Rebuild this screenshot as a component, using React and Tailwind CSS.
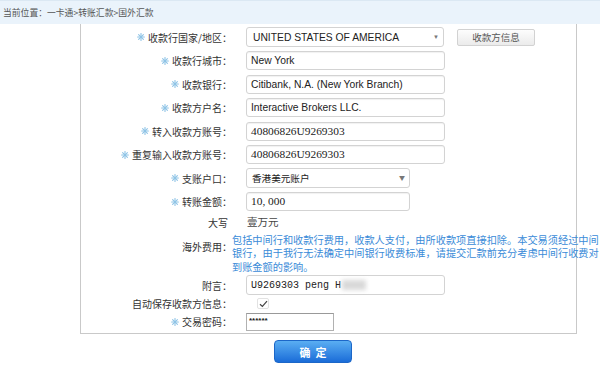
import React from 'react';

const CJK = { fontFamily: '"Noto Sans CJK SC", "Liberation Sans", sans-serif' };

function Star() {
  return (
    <svg width="8" height="8" viewBox="0 0 8 8" className="shrink-0">
      <g stroke="#8ec3e6" strokeWidth="1.1" strokeLinecap="round">
        <line x1="4" y1="0.6" x2="4" y2="7.4" />
        <line x1="0.6" y1="4" x2="7.4" y2="4" />
        <line x1="1.6" y1="1.6" x2="6.4" y2="6.4" />
        <line x1="6.4" y1="1.6" x2="1.6" y2="6.4" />
      </g>
    </svg>
  );
}

function Label({ text, star = true, colon = true }) {
  return (
    <div className="w-[151px] shrink-0 flex items-center justify-end gap-[3px] text-[10px] text-[#333]" style={CJK}>
      {star && <Star />}
      <span>{text}{colon ? '：' : ''}</span>
    </div>
  );
}

function Field({ children, w = 'w-[199px]', font = 'sans' }) {
  const ff = font === 'serif'
    ? { fontFamily: '"Liberation Serif", serif' }
    : font === 'cjk' ? CJK : { fontFamily: '"Liberation Sans", Arial, sans-serif' };
  return (
    <div
      className={`${w} h-[19px] ml-[14px] flex items-center px-[4px] border border-[#d3d3d3] rounded-[3px] bg-white shadow-[inset_0_1px_1px_rgba(0,0,0,0.06)] text-[#222]`}
      style={ff}
    >
      {children}
    </div>
  );
}

function Row({ label, star, colon, children, h = 'h-[23.5px]' }) {
  return (
    <div className={`flex items-center ${h}`}>
      <Label text={label} star={star} colon={colon} />
      {children}
    </div>
  );
}

function Caret() {
  return <span className="ml-auto mr-[4px] text-[6px] text-[#777] leading-none">▼</span>;
}

export default function App() {
  return (
    <div className="w-[600px] h-[365px] bg-white overflow-hidden">
      {/* breadcrumb */}
      <div className="h-[24px] bg-[#eaf3fb] border-t border-[#dbe8f3] flex items-center pl-[3px] text-[8.8px] text-[#555]" style={CJK}>
        当前位置：一卡通&gt;转账汇款&gt;国外汇款
      </div>

      {/* form panel */}
      <div className="ml-[80px] w-[497px] border-x border-b border-[#c9c9c9] pt-[1.5px]">
        <Row label="收款行国家/地区">
          <div className="w-[198px] h-[20px] ml-[14px] flex items-center pl-[6px] border border-[#d3d3d3] rounded-[3px] bg-white text-[10.3px] text-[#222]" style={{ fontFamily: '"Liberation Sans", Arial, sans-serif' }}>
            UNITED STATES OF AMERICA
            <Caret />
          </div>
          <button className="ml-[13px] w-[78px] h-[17px] border border-[#d2d2d2] rounded-[2px] bg-gradient-to-b from-[#fdfdfd] to-[#ebebeb] text-[9.5px] text-[#555]" style={CJK}>
            收款方信息
          </button>
        </Row>
        <Row label="收款行城市">
          <Field><span className="text-[10.3px]">New York</span></Field>
        </Row>
        <Row label="收款银行">
          <Field><span className="text-[10.3px]">Citibank, N.A. (New York Branch)</span></Field>
        </Row>
        <Row label="收款方户名">
          <Field><span className="text-[10.3px]">Interactive Brokers LLC.</span></Field>
        </Row>
        <Row label="转入收款方账号">
          <Field font="serif"><span className="text-[11.4px]">40806826U9269303</span></Field>
        </Row>
        <Row label="重复输入收款方账号">
          <Field font="serif"><span className="text-[11.4px]">40806826U9269303</span></Field>
        </Row>
        <Row label="支账户口">
          <div className="w-[164px] h-[20px] ml-[14px] flex items-center pl-[5px] border border-[#d3d3d3] rounded-[3px] bg-white text-[9.6px] text-[#222]" style={CJK}>
            香港美元账户
            <Caret />
          </div>
        </Row>
        <Row label="转账金额">
          <Field w="w-[164px]" font="serif"><span className="text-[11.4px]">10,&nbsp;000</span></Field>
        </Row>

        <div className="flex items-center h-[17px]">
          <div className="w-[147px] shrink-0 text-right text-[10px] text-[#333]" style={CJK}>大写</div>
          <span className="ml-[19px] text-[10.5px] text-[#444]" style={{ fontFamily: '"Noto Sans CJK SC", serif' }}>壹万元</span>
        </div>

        {/* overseas fee */}
        <div className="flex h-[43px]">
          <div className="w-[151px] shrink-0 text-right pt-[9px] text-[10px] leading-[14px] text-[#333]" style={CJK}>海外费用：</div>
          <div className="pt-[2px] text-[10.2px] leading-[13.5px] text-[#3a8bd8] whitespace-nowrap" style={CJK}>
            包括中间行和收款行费用，收款人支付，由所收款项直接扣除。本交易须经过中间<br />
            银行，由于我行无法确定中间银行收费标准，请提交汇款前充分考虑中间行收费对<br />
            到账金额的影响。
          </div>
        </div>

        <Row label="附言" star={false} h="h-[23px]">
          <div className="w-[199px] h-[20px] ml-[14px] flex items-center px-[4px] border border-[#d3d3d3] rounded-[3px] bg-white text-[#222]" style={{ fontFamily: '"Liberation Mono", monospace' }}>
            <span className="text-[10px]">U9269303 peng H</span>
            <span className="ml-[1px] w-[24px] h-[10px] bg-[#d9d9d9] blur-[2px]" />
          </div>
        </Row>

        <Row label="自动保存收款方信息" star={false} h="h-[14px]">
          <div className="ml-[25px] w-[12px] h-[11px] border border-[#e2e2e2] rounded-[2px] bg-white flex items-center justify-center">
            <svg width="9" height="8" viewBox="0 0 9 8">
              <path d="M1 4.2 L3.4 6.5 L8 1.2" fill="none" stroke="#444" strokeWidth="1.2" />
            </svg>
          </div>
        </Row>

        <Row label="交易密码" h="h-[22px]">
          <div className="w-[88px] h-[18px] ml-[14px] flex items-start pt-[2px] px-[2px] border border-[#b1b1b1] border-t-[#999] bg-white">
            <span className="text-[8px] font-bold text-[#222] leading-[9px]" style={{ fontFamily: '"Liberation Sans", sans-serif' }}>******</span>
          </div>
        </Row>
      </div>

      {/* submit */}
      <div className="ml-[274px] mt-[5px]">
        <button className="w-[78px] h-[23px] rounded-[4px] bg-gradient-to-b from-[#5aaef2] to-[#1a6cd8] border border-[#1c67c8] text-white text-[11px] font-bold tracking-[5px] pl-[5px]" style={CJK}>
          确定
        </button>
      </div>
    </div>
  );
}
